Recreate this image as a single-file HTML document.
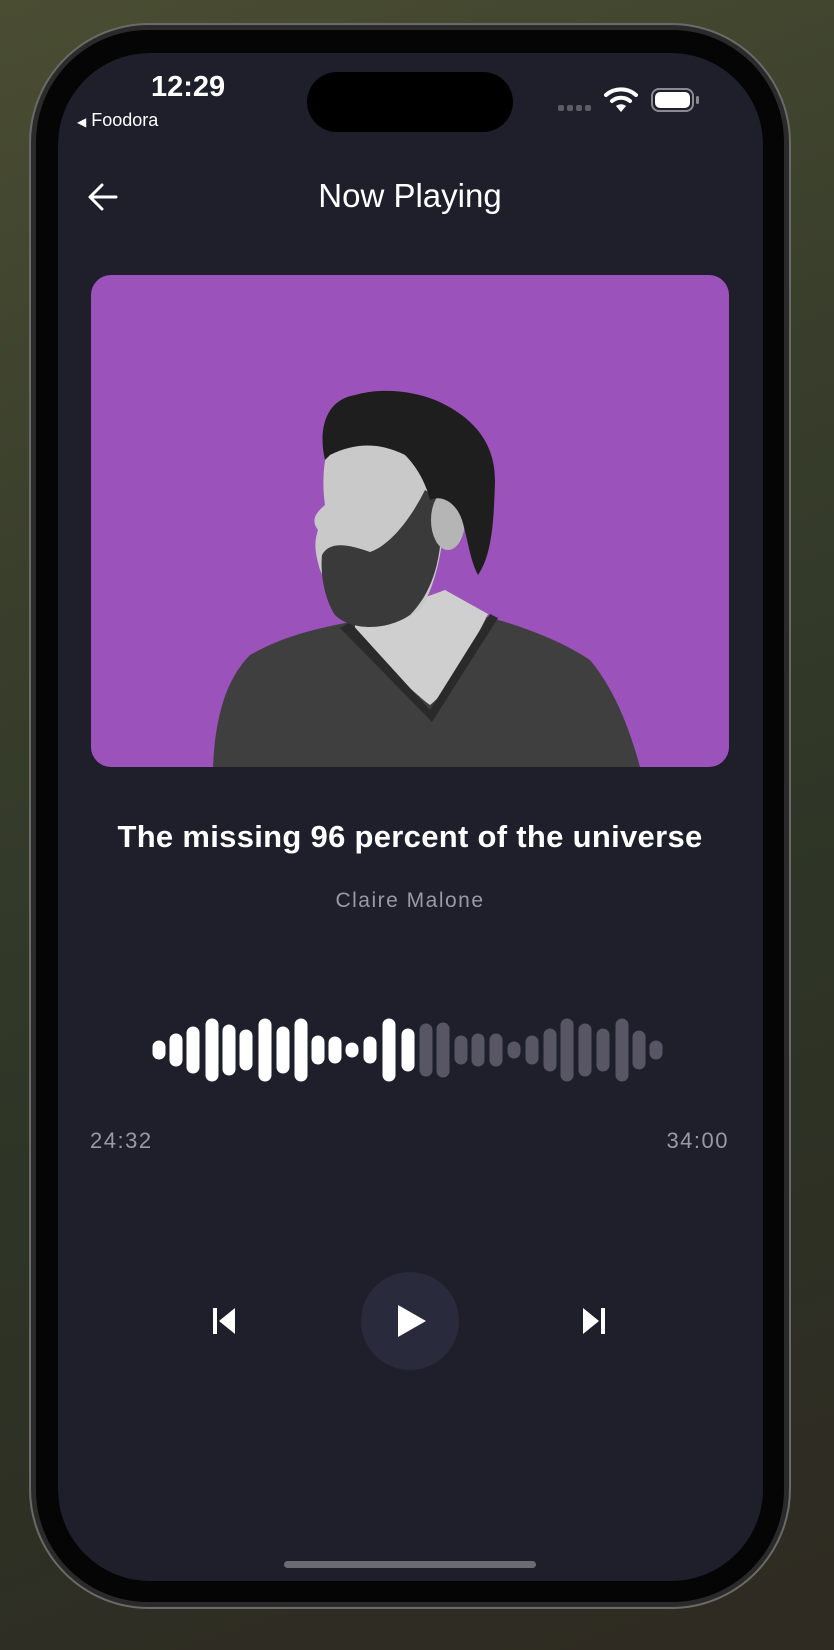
<!DOCTYPE html>
<html><head><meta charset="utf-8"><style>
html,body{margin:0;padding:0}
body{width:834px;height:1650px;position:relative;overflow:hidden;font-family:"Liberation Sans",sans-serif;
background:linear-gradient(160deg,#4a4d32 0%,#3a3f2c 30%,#2e3526 60%,#2f2a22 100%);}
.abs{position:absolute}
.frame{left:29px;top:23px;width:762px;height:1586px;border-radius:120px;background:#2a2a2a;border:2px solid #6a6a68;box-sizing:border-box}
.bezel{left:36px;top:30px;width:748px;height:1572px;border-radius:112px;background:#050505}
.screen{left:58px;top:53px;width:705px;height:1528px;border-radius:92px;background:#1f1e2b;overflow:hidden}
.t{color:#fff;position:absolute;white-space:nowrap}
</style></head><body>
<div class="abs frame"></div>
<div class="abs bezel"></div>
<div class="abs screen"></div>
<div class="abs" style="left:307px;top:72px;width:206px;height:60px;border-radius:30px;background:#000"></div>
<div class="t" style="left:151px;top:71px;font-size:29px;font-weight:bold;">12:29</div>
<div class="t" style="left:77px;top:110px;font-size:18px;"><span style="font-size:12px">◀</span> Foodora</div>
<div class="abs" style="left:558px;top:105px;width:36px;height:6px">
<span class="abs" style="left:0;width:6px;height:6px;border-radius:2px;background:#5c5c66"></span>
<span class="abs" style="left:9px;width:6px;height:6px;border-radius:2px;background:#5c5c66"></span>
<span class="abs" style="left:18px;width:6px;height:6px;border-radius:2px;background:#5c5c66"></span>
<span class="abs" style="left:27px;width:6px;height:6px;border-radius:2px;background:#5c5c66"></span>
</div>
<svg class="abs" style="left:604px;top:86px" width="36" height="28" viewBox="0 0 36 28"><path d="M2 9 A23 23 0 0 1 32 9" stroke="#fff" stroke-width="4" fill="none" stroke-linecap="round"/><path d="M8 15 A14 14 0 0 1 26 15" stroke="#fff" stroke-width="4" fill="none" stroke-linecap="round"/><path d="M12 20 L17 26 L22 20 A8 8 0 0 0 12 20Z" fill="#fff"/></svg>
<div class="abs" style="left:651px;top:88px;width:43px;height:24px;border:2px solid #8a8a92;border-radius:8px;box-sizing:border-box"></div>
<div class="abs" style="left:655px;top:92px;width:35px;height:16px;border-radius:5px;background:#fff"></div>
<div class="abs" style="left:696px;top:96px;width:3px;height:8px;border-radius:2px;background:#8a8a92"></div>
<svg class="abs" style="left:86px;top:180px" width="34" height="34" viewBox="0 0 34 34"><path d="M30 17H5M16 5L4 17L16 29" stroke="#fff" stroke-width="3" fill="none" stroke-linecap="round" stroke-linejoin="round"/></svg>
<div class="t" style="left:0;width:820px;text-align:center;top:177px;font-size:33px;">Now Playing</div>
<div class="abs" style="left:91px;top:275px;width:638px;height:492px;border-radius:20px;background:#9b53bb;overflow:hidden">
<svg width="638" height="492" viewBox="91 275 638 492" style="display:block">
<path d="M213 767 C215 720 225 680 250 655 C285 635 320 628 350 622 L420 640 L480 615 C520 625 560 640 590 660 C615 690 630 730 640 767Z" fill="#3f3f3f"/>
<path d="M355 615 C380 610 420 600 445 590 L488 614 C470 650 450 690 430 705 C410 690 380 660 355 628Z" fill="#cfcfcf"/>
<path d="M350 622 L430 710 L490 614 L498 618 L432 722 L340 628Z" fill="#2a2a2a"/>
<path d="M330 440 C360 430 410 440 440 470 C450 520 440 580 420 610 C400 625 360 630 340 615 C330 595 325 580 320 570 C316 555 313 545 318 530 C312 522 313 515 325 505 C322 485 323 460 330 440Z" fill="#c9c9c9"/>
<path d="M322 555 C330 540 350 545 370 552 C390 545 410 520 425 490 L440 500 C445 550 435 590 410 615 C385 632 350 630 335 615 C325 600 320 575 322 555Z" fill="#3a3a3a"/>
<ellipse cx="448" cy="520" rx="17" ry="30" fill="#b5b5b5"/>
<path d="M325 460 C318 430 325 400 355 395 C380 388 410 390 435 400 C470 415 495 440 495 480 C494 520 492 555 478 575 C470 560 468 540 462 520 C455 500 440 495 430 500 C425 480 415 465 405 455 C385 445 360 440 330 455Z" fill="#1e1e1e"/>
</svg>
</div>
<div class="t" style="left:0;width:820px;text-align:center;top:819px;font-size:31px;font-weight:bold;letter-spacing:0.3px">The missing 96 percent of the universe</div>
<div class="t" style="left:0;width:820px;text-align:center;top:889px;font-size:21px;letter-spacing:1.5px;color:#9a99a6">Claire Malone</div>
<svg class="abs" style="left:0;top:1000px" width="834" height="100" viewBox="0 1000 834 100">
<g stroke-linecap="round" stroke-width="13">
<g stroke="#fff">
<line x1="159" y1="1047" x2="159" y2="1053"/>
<line x1="176" y1="1040" x2="176" y2="1060"/>
<line x1="193" y1="1033" x2="193" y2="1067"/>
<line x1="212" y1="1025" x2="212" y2="1075"/>
<line x1="229" y1="1031" x2="229" y2="1069"/>
<line x1="246" y1="1036" x2="246" y2="1064"/>
<line x1="265" y1="1025" x2="265" y2="1075"/>
<line x1="283" y1="1033" x2="283" y2="1067"/>
<line x1="301" y1="1025" x2="301" y2="1075"/>
<line x1="318" y1="1042" x2="318" y2="1058"/>
<line x1="335" y1="1043" x2="335" y2="1057"/>
<line x1="352" y1="1049" x2="352" y2="1051"/>
<line x1="370" y1="1043" x2="370" y2="1057"/>
<line x1="389" y1="1025" x2="389" y2="1075"/>
<line x1="408" y1="1035" x2="408" y2="1065"/>
</g>
<g stroke="#585664">
<line x1="426" y1="1030" x2="426" y2="1070"/>
<line x1="443" y1="1029" x2="443" y2="1071"/>
<line x1="461" y1="1042" x2="461" y2="1058"/>
<line x1="478" y1="1040" x2="478" y2="1060"/>
<line x1="496" y1="1040" x2="496" y2="1060"/>
<line x1="514" y1="1048" x2="514" y2="1052"/>
<line x1="532" y1="1042" x2="532" y2="1058"/>
<line x1="550" y1="1035" x2="550" y2="1065"/>
<line x1="567" y1="1025" x2="567" y2="1075"/>
<line x1="585" y1="1030" x2="585" y2="1070"/>
<line x1="603" y1="1035" x2="603" y2="1065"/>
<line x1="622" y1="1025" x2="622" y2="1075"/>
<line x1="639" y1="1037" x2="639" y2="1063"/>
<line x1="656" y1="1047" x2="656" y2="1053"/>
</g></g></svg>
<div class="t" style="left:90px;top:1128px;font-size:22px;letter-spacing:1.5px;color:#9a99a6">24:32</div>
<div class="t" style="right:105px;top:1128px;font-size:22px;letter-spacing:1.5px;color:#9a99a6">34:00</div>
<svg class="abs" style="left:210px;top:1305px" width="32" height="32" viewBox="0 0 32 32"><rect x="3" y="3" width="4" height="26" fill="#fff"/><path d="M25 3 V29 L9 16Z" fill="#fff"/></svg>
<div class="abs" style="left:361px;top:1272px;width:98px;height:98px;border-radius:50%;background:#292a3b"></div>
<svg class="abs" style="left:395px;top:1303px" width="36" height="36" viewBox="0 0 36 36"><path d="M3 2 L31 18 L3 34Z" fill="#fff"/></svg>
<svg class="abs" style="left:580px;top:1305px" width="32" height="32" viewBox="0 0 32 32"><path d="M3 3 V29 L19 16Z" fill="#fff"/><rect x="21" y="3" width="4" height="26" fill="#fff"/></svg>
<div class="abs" style="left:284px;top:1561px;width:252px;height:7px;border-radius:4px;background:#6b6b72"></div>
</body></html>
